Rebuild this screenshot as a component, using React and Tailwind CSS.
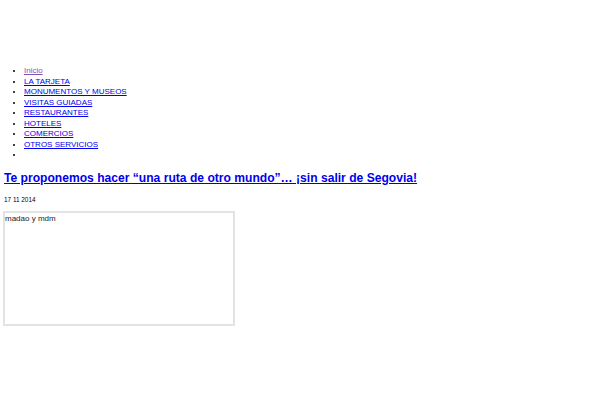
export default function App() {
  const items = ["Inicio", "LA TARJETA", "MONUMENTOS Y MUSEOS", "VISITAS GUIADAS", "RESTAURANTES", "HOTELES", "COMERCIOS", "OTROS SERVICIOS"];
  return (
    <div className="w-[600px] h-[400px] bg-white overflow-hidden" style={{ fontFamily: '"Liberation Sans", Arial, sans-serif' }}>
      <ul className="list-disc pl-[24px] pt-[66px] text-[8px] leading-[10.5px]">
        {items.map((t, i) => (
          <li key={t}>
            <a href="#" className={i === 0 ? "underline text-[#8a4fb8]" : "underline text-[#0000ee]"}>{t}</a>
          </li>
        ))}
        <li>&nbsp;</li>
      </ul>
      <h1 className="mt-[8px] ml-[4px] text-[12.1px] leading-[18px] font-bold">
        <a href="#" className="underline text-[#0000ee]">Te proponemos hacer “una ruta de otro mundo”… ¡sin salir de Segovia!</a>
      </h1>
      <div className="ml-[4px] mt-[9px] text-[6.4px] leading-[8px] text-black">17 11 2014</div>
      <div className="ml-[3px] mt-[7px] w-[232px] h-[115px] border-2 border-[#e3e3e3] text-[8px] leading-[10px] text-[#222]">
        <div className="pt-[1px]">madao y mdm</div>
      </div>
    </div>
  );
}
